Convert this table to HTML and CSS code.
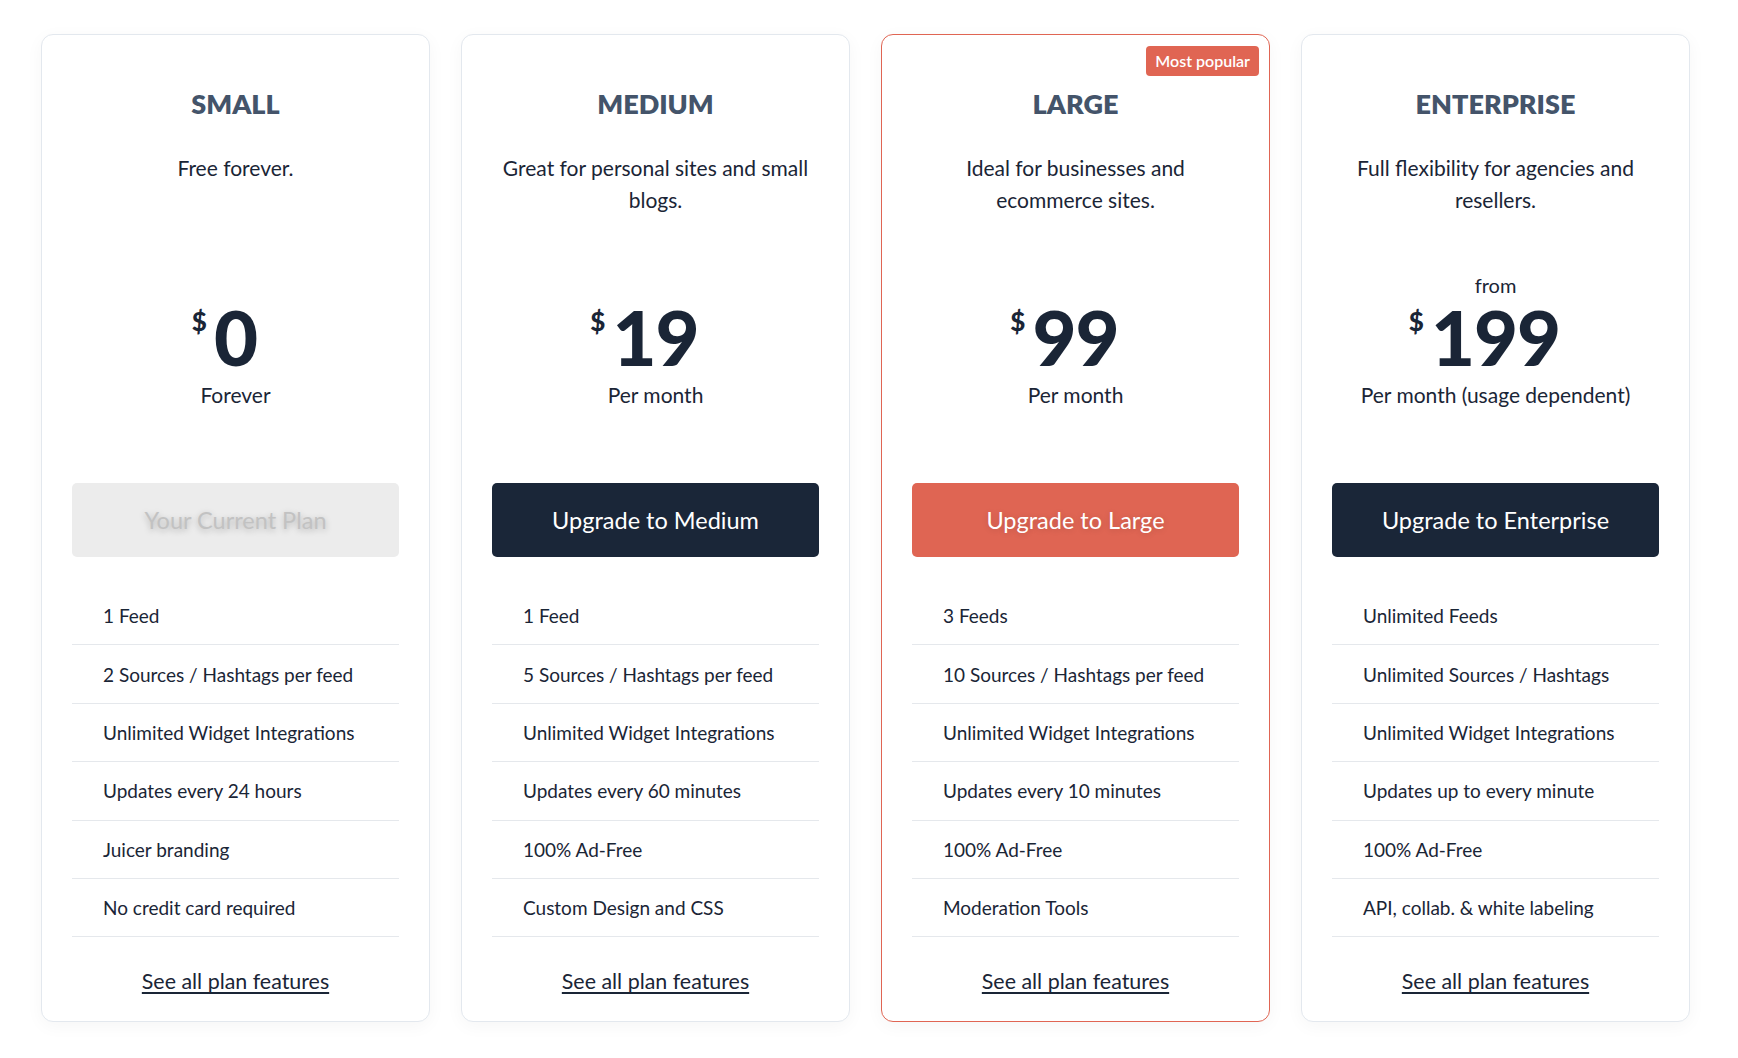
FILE: index.html
```html
<!DOCTYPE html>
<html lang="en">
<head>
<meta charset="UTF-8">
<meta name="viewport" content="width=device-width, initial-scale=1.0">
<title>Pricing</title>
<link rel="stylesheet" href="styles.css">
</head>
<body>

<div class="plans">

  <div class="plan">
    <h2 class="plan-name">SMALL</h2>
    <p class="plan-desc">Free forever.</p>
    <div class="plan-price">
      <div class="price-amount"><span class="currency">$</span>0</div>
      <div class="price-period">Forever</div>
    </div>
    <button class="plan-btn btn-current">Your Current Plan</button>
    <ul class="features">
      <li>1 Feed</li>
      <li>2 Sources / Hashtags per feed</li>
      <li>Unlimited Widget Integrations</li>
      <li>Updates every 24 hours</li>
      <li>Juicer branding</li>
      <li>No credit card required</li>
    </ul>
    <a class="plan-link" href="#">See all plan features</a>
  </div>

  <div class="plan">
    <h2 class="plan-name">MEDIUM</h2>
    <p class="plan-desc">Great for personal sites and small blogs.</p>
    <div class="plan-price">
      <div class="price-amount"><span class="currency">$</span>19</div>
      <div class="price-period">Per month</div>
    </div>
    <button class="plan-btn btn-dark">Upgrade to Medium</button>
    <ul class="features">
      <li>1 Feed</li>
      <li>5 Sources / Hashtags per feed</li>
      <li>Unlimited Widget Integrations</li>
      <li>Updates every 60 minutes</li>
      <li>100% Ad-Free</li>
      <li>Custom Design and CSS</li>
    </ul>
    <a class="plan-link" href="#">See all plan features</a>
  </div>

  <div class="plan plan-popular">
    <span class="badge">Most popular</span>
    <h2 class="plan-name">LARGE</h2>
    <p class="plan-desc">Ideal for businesses and ecommerce sites.</p>
    <div class="plan-price">
      <div class="price-amount"><span class="currency">$</span>99</div>
      <div class="price-period">Per month</div>
    </div>
    <button class="plan-btn btn-accent">Upgrade to Large</button>
    <ul class="features">
      <li>3 Feeds</li>
      <li>10 Sources / Hashtags per feed</li>
      <li>Unlimited Widget Integrations</li>
      <li>Updates every 10 minutes</li>
      <li>100% Ad-Free</li>
      <li>Moderation Tools</li>
    </ul>
    <a class="plan-link" href="#">See all plan features</a>
  </div>

  <div class="plan">
    <h2 class="plan-name">ENTERPRISE</h2>
    <p class="plan-desc">Full flexibility for agencies and resellers.</p>
    <div class="plan-price">
      <div class="price-from">from</div>
      <div class="price-amount"><span class="currency">$</span>199</div>
      <div class="price-period">Per month (usage dependent)</div>
    </div>
    <button class="plan-btn btn-dark">Upgrade to Enterprise</button>
    <ul class="features">
      <li>Unlimited Feeds</li>
      <li>Unlimited Sources / Hashtags</li>
      <li>Unlimited Widget Integrations</li>
      <li>Updates up to every minute</li>
      <li>100% Ad-Free</li>
      <li>API, collab. &amp; white labeling</li>
    </ul>
    <a class="plan-link" href="#">See all plan features</a>
  </div>

</div>

</body>
</html>
```

FILE: styles.css
```css
body {
  margin: 0;
  font-family: Lato, "Open Sans", sans-serif;
  color: #1a2536;
  background-color: #fff;
}
.plans {
  display: flex;
  gap: 31px;
  padding: 34px 0 36px 41px;
}
.plan {
  position: relative;
  box-sizing: border-box;
  width: 389px;
  height: 988px;
  padding: 53px 30px 0;
  display: flex;
  flex-direction: column;
  text-align: center;
  background-color: #fff;
  border: 1px solid #e3e8ee;
  border-radius: 12px;
  box-shadow: 0 4px 18px rgba(0, 0, 0, 0.04);
}
.plan-popular {
  border-color: #e06553;
}
.badge {
  position: absolute;
  top: 11px;
  right: 10px;
  padding: 0 9px;
  height: 30px;
  line-height: 30px;
  font-size: 16px;
  font-weight: 600;
  color: #fff;
  background-color: #e06553;
  border-radius: 4px;
}
.plan-name {
  margin: 0;
  font-size: 27px;
  line-height: 32px;
  font-weight: 800;
  color: #44546a;
}
.plan-desc {
  margin: 32px 0 0;
  height: 64px;
  font-size: 21px;
  line-height: 32px;
}
.plan-price {
  height: 193px;
  display: flex;
  flex-direction: column;
  justify-content: flex-end;
}
.price-from {
  margin-bottom: 2px;
  font-size: 20px;
  line-height: 24px;
}
.price-amount {
  position: relative;
  align-self: center;
  font-size: 76px;
  font-weight: 900;
  line-height: 76px;
  letter-spacing: -1px;
}
.currency {
  position: absolute;
  right: 100%;
  top: 9px;
  margin-right: 7px;
  font-size: 26px;
  line-height: 26px;
  letter-spacing: 0;
}
.price-period {
  margin-top: 6px;
  font-size: 21px;
  line-height: 28px;
}
.plan-btn {
  margin-top: 74px;
  height: 74px;
  width: 100%;
  font-family: inherit;
  font-size: 23.5px;
  border: none;
  border-radius: 5px;
  cursor: pointer;
}
.btn-current {
  background-color: #ececec;
  color: #c2c2c2;
  text-shadow: 0 2px 6px rgba(0, 0, 0, 0.25);
  cursor: default;
}
.btn-dark {
  background-color: #1a2638;
  color: #fff;
}
.btn-accent {
  background-color: #df6553;
  color: #fff;
  text-shadow: 0 1px 6px rgba(0, 0, 0, 0.15);
}
.features {
  list-style-type: none;
  margin: 30px 0 0;
  padding: 0;
  text-align: left;
}
.features li {
  box-sizing: border-box;
  height: 58.4px;
  padding-left: 31px;
  display: flex;
  align-items: center;
  font-size: 19px;
  border-bottom: 1px solid #e5e8ec;
}
.plan-link {
  margin-top: 31px;
  align-self: center;
  font-size: 21.4px;
  line-height: 26px;
  color: #1a2536;
  text-decoration-thickness: 1.5px;
  text-underline-offset: 3px;
}
```
